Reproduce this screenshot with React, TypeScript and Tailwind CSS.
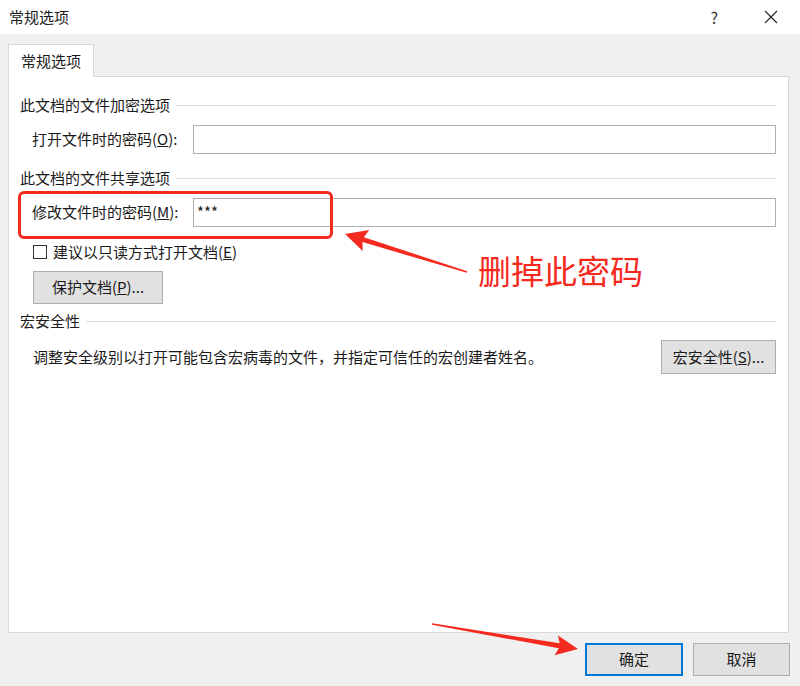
import React from 'react'

const font = { fontFamily: '"Noto Sans CJK SC", "Noto Sans", sans-serif' }

// arrow polygon: tail -> tip, thin tail widening toward a barbed head
function arrowPoints(tx: number, ty: number, hx: number, hy: number, head = 24, barb = 11, shaft = 4) {
  const dx = tx - hx
  const dy = ty - hy
  const len = Math.hypot(dx, dy)
  const ux = dx / len
  const uy = dy / len
  const px = -uy
  const py = ux
  const bx = hx + ux * head
  const by = hy + uy * head
  const pts = [
    [hx, hy],
    [bx + px * barb, by + py * barb],
    [bx + px * shaft * 0.5 + ux * -3, by + py * shaft * 0.5 + uy * -3],
    [tx + px * 0.8, ty + py * 0.8],
    [tx - px * 0.8, ty - py * 0.8],
    [bx - px * shaft * 0.5 + ux * -3, by - py * shaft * 0.5 + uy * -3],
    [bx - px * barb, by - py * barb],
  ]
  return pts.map((p) => p.join(',')).join(' ')
}

function SectionHeader({ title }: { title: string }) {
  return (
    <div className="flex items-center h-[20px]">
      <span className="text-[15px] leading-[20px] text-[#1a1a1a]">{title}</span>
      <div className="flex-1 h-px bg-[#dcdcdc] ml-[6px]" />
    </div>
  )
}

function WinButton({ children, className = '' }: { children: React.ReactNode; className?: string }) {
  return (
    <div
      className={`flex items-center justify-center bg-[#e1e1e1] border border-[#adadad] text-[15px] text-[#1a1a1a] ${className}`}
    >
      {children}
    </div>
  )
}

export default function App() {
  return (
    <div className="relative w-[800px] h-[686px] bg-[#f0f0f0] flex flex-col overflow-hidden" style={font}>
      {/* Title bar */}
      <div className="h-[34px] bg-white flex items-center pl-[9px] pr-[22px]">
        <span className="text-[15px] text-[#1a1a1a]">常规选项</span>
        <div className="flex-1" />
        <span className="text-[16px] text-[#333] mr-[46px]">?</span>
        <svg width="14" height="14" viewBox="0 0 14 14">
          <path d="M1 1 L13 13 M13 1 L1 13" stroke="#222" strokeWidth="1.1" />
        </svg>
      </div>

      {/* Tabs + panel */}
      <div className="flex-1 flex flex-col pl-[8px] pr-[11px] pt-[10px]">
        <div className="relative z-10 -mb-px w-[86px] h-[33px] bg-white border border-b-0 border-[#d9d9d9] flex items-center pl-[12px]">
          <span className="text-[15px] text-[#1a1a1a]">常规选项</span>
        </div>
        <div className="flex-1 bg-white border border-[#d9d9d9] pl-[11px] pr-[12px] pt-[18px]">
          <SectionHeader title="此文档的文件加密选项" />
          <div className="flex items-center mt-[10px] pl-[12px]">
            <span className="w-[161px] text-[15px] text-[#1a1a1a]">
              打开文件时的密码(<span className="underline">O</span>):
            </span>
            <div className="flex-1 h-[29px] border border-[#b0b0b0] bg-white" />
          </div>

          <div className="mt-[14px]">
            <SectionHeader title="此文档的文件共享选项" />
          </div>
          <div className="flex items-center mt-[10px] pl-[12px]">
            <span className="w-[161px] text-[15px] text-[#1a1a1a]">
              修改文件时的密码(<span className="underline">M</span>):
            </span>
            <div className="flex-1 h-[29px] border border-[#b0b0b0] bg-white flex items-center pl-[3px] text-[15px] text-[#1a1a1a]">
              ***
            </div>
          </div>

          <div className="flex items-center mt-[18px] pl-[13px]">
            <div className="w-[14px] h-[14px] border border-[#333] bg-white" />
            <span className="ml-[6px] text-[15px] text-[#1a1a1a] leading-[14px]">
              建议以只读方式打开文档(<span className="underline">E</span>)
            </span>
          </div>

          <div className="mt-[12px] pl-[13px]">
            <WinButton className="w-[130px] h-[33px]">
              保护文档(<span className="underline">P</span>)...
            </WinButton>
          </div>

          <div className="mt-[7px]">
            <SectionHeader title="宏安全性" />
          </div>
          <div className="flex items-center justify-between mt-[9px] pl-[13px]">
            <span className="text-[15px] text-[#1a1a1a]">
              调整安全级别以打开可能包含宏病毒的文件，并指定可信任的宏创建者姓名。
            </span>
            <WinButton className="w-[115px] h-[34px]">
              宏安全性(<span className="underline">S</span>)...
            </WinButton>
          </div>
        </div>

        {/* Footer buttons */}
        <div className="flex justify-end gap-[10px] pt-[10px] pb-[10px] -mr-[1px]">
          <WinButton className="w-[98px] h-[33px] !border-2 !border-[#0078d7]">确定</WinButton>
          <WinButton className="w-[97px] h-[33px]">取消</WinButton>
        </div>
      </div>

      {/* Annotation overlays */}
      <div className="absolute left-[18px] top-[191px] w-[315px] h-[48px] border-[3px] border-[#f52a1f] rounded-[6px]" />
      <svg className="absolute inset-0 pointer-events-none" width="800" height="686">
        <polygon points={arrowPoints(467, 272, 345, 234, 22, 11, 5)} fill="#f52a1f" />
        <polygon points={arrowPoints(432, 624, 578, 649, 22, 10, 5)} fill="#f52a1f" />
      </svg>
      <div className="absolute left-[478px] top-[250px] text-[33px] leading-[40px] text-[#f52a1f]">删掉此密码</div>
    </div>
  )
}
